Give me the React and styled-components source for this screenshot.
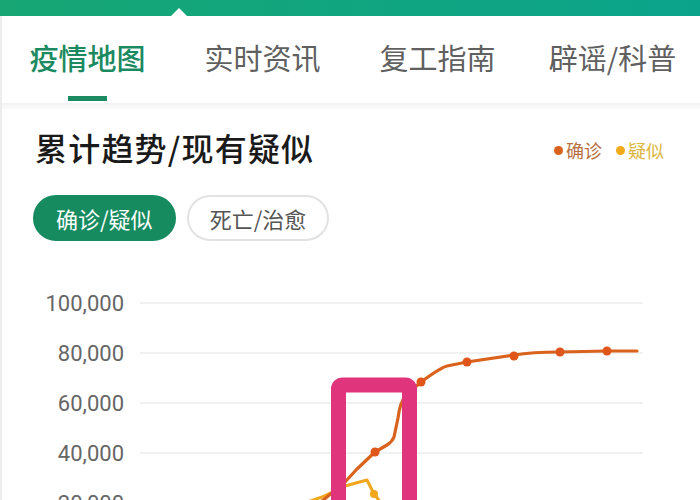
import React from "react";
import styled, { createGlobalStyle } from "styled-components";

const Global = createGlobalStyle`
  html, body { margin: 0; padding: 0; background: #fff; }
  body { width: 700px; height: 500px; overflow: hidden; font-family: "Noto Sans CJK SC", "Noto Sans", sans-serif; }
`;

const Page = styled.div`
  width: 700px;
  height: 500px;
  overflow: hidden;
  display: flex;
  flex-direction: column;
`;

const TopBar = styled.div`
  position: relative;
  height: 16px;
  flex: none;
  background: linear-gradient(90deg, #17a674, #0ba48b);
  &::after {
    content: "";
    position: absolute;
    left: 171px;
    bottom: 0;
    border-left: 8px solid transparent;
    border-right: 8px solid transparent;
    border-bottom: 8px solid #fff;
  }
`;

const Body = styled.div`
  flex: 1;
  border-left: 2px solid #ececec;
  display: flex;
  flex-direction: column;
`;

const TabBar = styled.div`
  display: flex;
  height: 87px;
  margin-left: -2px;
  flex: none;
`;

const Tab = styled.div`
  flex: 1;
  display: flex;
  flex-direction: column;
  align-items: center;
  padding-top: 27px;
  font-size: 29px;
  line-height: 29px;
  color: ${(p) => (p.$active ? "#1b8a60" : "#606060")};
  font-weight: ${(p) => (p.$active ? 500 : 400)};
  white-space: nowrap;
`;

const Indicator = styled.div`
  width: 39px;
  height: 5px;
  margin-top: 24px;
  background: #1b8a60;
  visibility: ${(p) => (p.$show ? "visible" : "hidden")};
`;

const Shadow = styled.div`
  height: 6px;
  flex: none;
  background: linear-gradient(#f2f2f2, #fbfbfb);
`;

const TitleRow = styled.div`
  display: flex;
  justify-content: space-between;
  align-items: center;
  padding: 22px 36px 0 33px;
`;

const Title = styled.div`
  font-size: 32px;
  line-height: 32px;
  color: #1a1a1a;
  font-weight: 500;
  letter-spacing: 1.2px;
`;

const Legend = styled.div`
  display: flex;
  align-items: center;
  gap: 14px;
  margin-top: 6px;
`;

const LegendItem = styled.div`
  display: flex;
  align-items: center;
  gap: 3px;
  font-size: 18px;
  line-height: 18px;
  color: ${(p) => p.$color};
  &::before {
    content: "";
    width: 9px;
    height: 9px;
    border-radius: 50%;
    background: ${(p) => p.$dot};
  }
`;

const ButtonRow = styled.div`
  display: flex;
  gap: 11px;
  padding: 32px 0 0 31px;
`;

const Pill = styled.div`
  height: 46px;
  box-sizing: border-box;
  padding: 0 21px;
  border-radius: 23px;
  display: flex;
  align-items: center;
  font-size: 22px;
  background: ${(p) => (p.$active ? "#168b5f" : "#fff")};
  color: ${(p) => (p.$active ? "#fff" : "#555")};
  border: 2px solid ${(p) => (p.$active ? "#168b5f" : "#e2e2e2")};
`;

const ChartWrap = styled.div`
  flex: 1;
  display: block;
`;

const Chart = styled.svg`
  display: block;
  width: 700px;
  height: 259px;
  font-family: Roboto, "Noto Sans", sans-serif;
`;

const ticks = [100000, 80000, 60000, 40000, 20000];
const yOf = (v) => 553 - v / 400;

const orangeDots = [
  [373, 452],
  [419, 382],
  [465, 362],
  [512, 356],
  [558, 352],
  [605, 351],
];

export default function App() {
  return (
    <Page>
      <Global />
      <TopBar />
      <Body>
        <TabBar>
          {["疫情地图", "实时资讯", "复工指南", "辟谣/科普"].map((t, i) => (
            <Tab key={t} $active={i === 0}>
              {t}
              <Indicator $show={i === 0} />
            </Tab>
          ))}
        </TabBar>
        <Shadow />
        <TitleRow>
          <Title>累计趋势/现有疑似</Title>
          <Legend>
            <LegendItem $dot="#d9611c" $color="#b8703f">确诊</LegendItem>
            <LegendItem $dot="#f0aa1a" $color="#dcb640">疑似</LegendItem>
          </Legend>
        </TitleRow>
        <ButtonRow>
          <Pill $active>确诊/疑似</Pill>
          <Pill>死亡/治愈</Pill>
        </ButtonRow>
        <ChartWrap>
          <Chart viewBox="0 241 700 259">
            {ticks.map((v) => (
              <g key={v}>
                <line x1="138" x2="641" y1={yOf(v)} y2={yOf(v)} stroke="#ededed" strokeWidth="1.5" />
                <text x="122" y={yOf(v) + 8} textAnchor="end" fontSize="22" fill="#666">
                  {v.toLocaleString("en-US")}
                </text>
              </g>
            ))}
            <path
              d="M 300 504 L 320 497 L 343 486 L 365 480 L 372 494 L 380 504"
              fill="none"
              stroke="#f0a71e"
              strokeWidth="3"
              strokeLinejoin="round"
            />
            <circle cx="372" cy="494" r="4" fill="#f0a71e" />
            <path
              d="M 315 505 L 325 497 L 343 482 L 355 469 L 373 452 L 385 445 Q 390 442 392 437 L 396 418 Q 398 402 404 395 L 419 382 C 430 374 438 368 445 366 L 465 362 L 512 355 C 530 352 545 352 558 352 L 605 351 L 635 351"
              fill="none"
              stroke="#d9621c"
              strokeWidth="3.2"
              strokeLinejoin="round"
              strokeLinecap="round"
            />
            {orangeDots.map(([x, y]) => (
              <circle key={x} cx={x} cy={y} r="4.5" fill="#e0561a" />
            ))}
            <rect x="336.5" y="385" width="71" height="200" rx="4" fill="none" stroke="#e0357c" strokeWidth="15" />
          </Chart>
        </ChartWrap>
      </Body>
    </Page>
  );
}
